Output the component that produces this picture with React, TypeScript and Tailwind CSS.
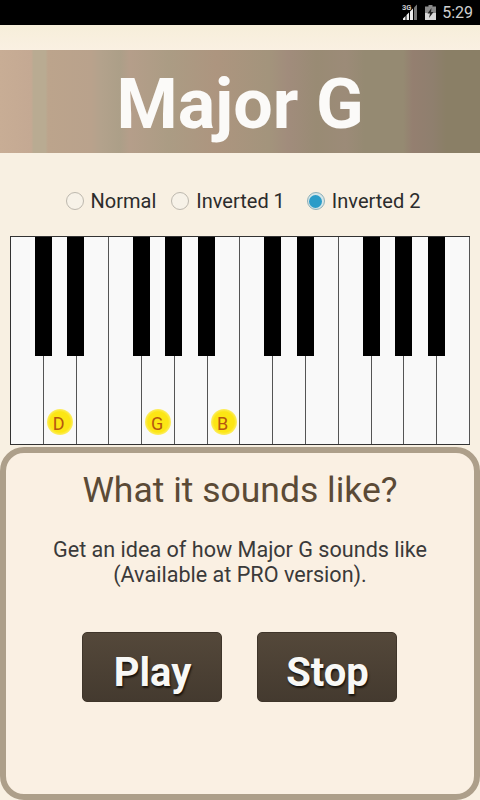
import React from 'react';
import { useState } from 'react';

const whiteKeys = ['', 'D', '', '', 'G', '', 'B', '', '', '', '', '', '', ''];
const blackKeys = [35, 67, 133, 165, 198, 264, 297, 363, 395, 428];
const modes = ['Normal', 'Inverted 1', 'Inverted 2'];

function StatusBar() {
  return (
    <div className="flex h-[25px] items-center justify-end bg-black pr-[7px]">
      <svg width="17" height="18" viewBox="0 0 17 18" className="mr-[6px] mt-[-1px]">
        <text x="0" y="7" fontSize="7.500" fontWeight="700" fill="#ccc" fontFamily="Roboto, sans-serif">3G</text>
        <path d="M1 17v-1.500L3.500 13v4zM4.500 17v-5L7 9.500V17zM8 17V8.500l3-3V17z" fill="#eee" />
        <path d="M12 17V4.500l3-3V17z" fill="#777" />
      </svg>
      <svg width="11" height="15" viewBox="0 0 11 15" className="mr-[6px]">
        <path d="M3.500 0h4v1.500H11V15H0V1.500h3.500z" fill="#8a8a8a" />
        <path d="M0 8h11v7H0z" fill="#d8d8d8" />
        <path d="M6.500 3 2.500 8.500H5L4 13l4.500-6H6z" fill="#222" />
      </svg>
      <span className="text-[16px] leading-none text-[#cfcfcf]">5:29</span>
    </div>
  );
}

function Radio({ label, checked, onClick }: { label: string; checked: boolean; onClick: () => void }) {
  return (
    <button type="button" onClick={onClick} className="flex items-center gap-[7px]">
      <span className={`flex h-[18px] w-[18px] items-center justify-center rounded-full border-[1.5px] ${checked ? 'border-[#8fb0b8] bg-[#d5e6e8]' : 'border-[#bdb8ae] bg-[#f7f2e8]'}`}>
        {checked && <span className="h-[13px] w-[13px] rounded-full bg-[#2a9cc8]" />}
      </span>
      <span className="text-[20px] leading-none text-[#2c2c2c]">{label}</span>
    </button>
  );
}

function Piano() {
  return (
    <div className="relative mx-[10px] flex h-[209px] border-t border-b border-l border-[#333] bg-[#f9f9f9]">
      {whiteKeys.map((note, i) => (
        <div key={i} className="relative flex-1 border-r border-[#555]">
          {note && (
            <span className="absolute bottom-[9px] left-1/2 flex h-[26px] w-[26px] -translate-x-1/2 items-center justify-center rounded-full bg-[radial-gradient(circle,#fce614_55%,#fdf07a_75%,transparent_100%)] pt-[4px] pr-[2px] text-[18px] leading-none text-[#b5570f]">
              {note}
            </span>
          )}
        </div>
      ))}
      {blackKeys.map((x) => (
        <div key={x} className="absolute top-0 h-[119px] w-[17px] bg-black" style={{ left: x - 11 }} />
      ))}
    </div>
  );
}

function ActionButton({ label }: { label: string }) {
  return (
    <button
      type="button"
      className="h-[70px] w-[140px] rounded-[5px] border border-[#3f352a] bg-gradient-to-b from-[#54483a] to-[#443a2f] pt-[11px] pl-[1px] text-[40px] font-bold leading-none text-[#f8f8f6] [text-shadow:1px_2px_2px_#17120c]"
    >
      {label}
    </button>
  );
}

export default function App() {
  const [mode, setMode] = useState(2);

  return (
    <div className="flex h-[800px] w-[480px] flex-col overflow-hidden bg-[#f8f0e2] font-['Roboto',sans-serif]">
      <StatusBar />
      <div className="h-[25px] bg-gradient-to-b from-[#f6eeda] to-[#faf0e2]" />
      <div className="flex h-[103px] items-center justify-center bg-[linear-gradient(90deg,#c8ad95_0%,#c4a993_6.500%,#b9ab92_7%,#b9ab92_9.500%,#bca48c_10%,#b9a28c_19%,#b3a28c_21%,#ac9f88_25%,#b59e8a_27%,#ab9c84_35%,#ad957f_45%,#a3947c_56%,#a18c7c_60%,#998b74_66%,#9c8b78_72%,#958a72_76%,#958a72_84%,#947f70_86%,#8f7f6e_90%,#8a7f66_93%,#8a7f66_100%)] pt-[4px]">
        <h1 className="text-[70px] font-bold leading-none text-[#fbfaf8]">Major G</h1>
      </div>
      <div className="flex h-[83px] items-center justify-center pt-[13px] pl-[6px]">
        {modes.map((m, i) => (
          <div key={m} className={i === 0 ? '' : i === 1 ? 'ml-[15px]' : 'ml-[22px]'}>
            <Radio label={m} checked={mode === i} onClick={() => setMode(i)} />
          </div>
        ))}
      </div>
      <Piano />
      <div className="mt-[2px] flex flex-1 flex-col items-center rounded-[24px] border-[6px] border-[#ad9f8a] bg-[#faf0e3] pt-[17px]">
        <h2 className="text-[35.500px] leading-[40px] text-[#5b4a36]">What it sounds like?</h2>
        <p className="mt-[27px] text-center text-[21.600px] leading-[25px] text-[#3a3a3a]">
          Get an idea of how Major G sounds like
          <br />
          (Available at PRO version).
        </p>
        <div className="mt-[45px] ml-[-1px] flex gap-[35px]">
          <ActionButton label="Play" />
          <ActionButton label="Stop" />
        </div>
      </div>
    </div>
  );
}
